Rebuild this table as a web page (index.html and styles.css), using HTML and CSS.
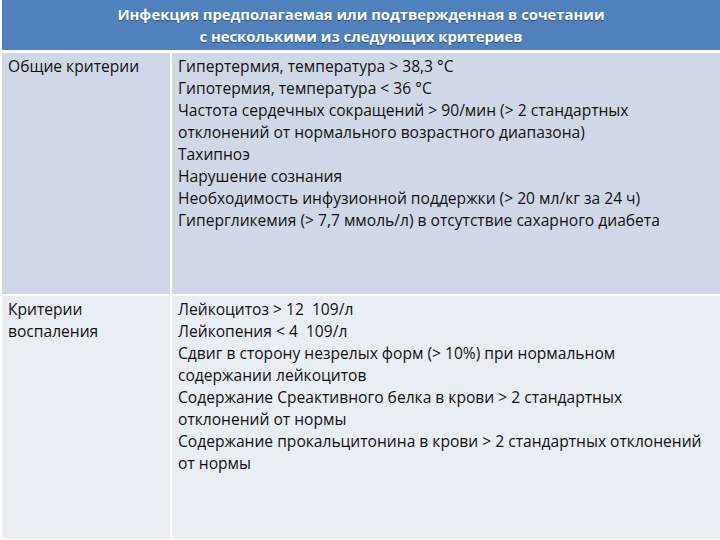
FILE: index.html
```html
<!DOCTYPE html>
<html lang="ru">
<head>
<meta charset="utf-8">
<link rel="stylesheet" href="styles.css">
</head>
<body>
<div class="table">
  <div class="head">Инфекция предполагаемая или подтвержденная в сочетании<br>с несколькими из следующих критериев</div>
  <div class="cell label r1">Общие критерии</div>
  <div class="cell r1">Гипертермия, температура &gt; 38,3 °C<br>Гипотермия, температура &lt; 36 °C<br>Частота сердечных сокращений &gt; 90/мин (&gt; 2 стандартных отклонений от нормального возрастного диапазона)<br>Тахипноэ<br>Нарушение сознания<br>Необходимость инфузионной поддержки (&gt; 20 мл/кг за 24 ч)<br>Гипергликемия (&gt; 7,7 ммоль/л) в отсутствие сахарного диабета</div>
  <div class="cell label r2">Критерии<br>воспаления</div>
  <div class="cell r2">Лейкоцитоз &gt; 12&nbsp; 109/л<br>Лейкопения &lt; 4&nbsp; 109/л<br>Сдвиг в сторону незрелых форм (&gt; 10%) при нормальном содержании лейкоцитов<br>Содержание Среактивного белка в крови &gt; 2 стандартных отклонений от нормы<br>Содержание прокальцитонина в крови &gt; 2 стандартных отклонений от нормы</div>
</div>
</body>
</html>
```
FILE: styles.css
```css
html, body {
  margin: 0;
  padding: 0;
  background: #ffffff;
}
body {
  width: 720px;
  height: 540px;
  overflow: hidden;
  font-family: "Open Sans", "Noto Sans", sans-serif;
}
.table {
  display: grid;
  grid-template-columns: 168px 1fr;
  grid-template-rows: 51px 241px 243px;
  column-gap: 2px;
  row-gap: 2px;
  padding-left: 2px;
}
.head {
  grid-column: 1 / 3;
  background: #4f81bd;
  color: #ffffff;
  font-weight: bold;
  font-size: 14.8px;
  line-height: 22px;
  text-align: center;
  padding-top: 3px;
  margin-bottom: 1px;
  text-shadow: 0 1px 1px rgba(0,0,0,0.35);
}
.cell {
  font-size: 15.6px;
  line-height: 22px;
  color: #111;
  padding: 2px 8px 0 6px;
}
.label {
  padding-left: 6px;
}
.r1 { background: #d0d8e8; }
.r2 { background: #e9edf4; }
```
